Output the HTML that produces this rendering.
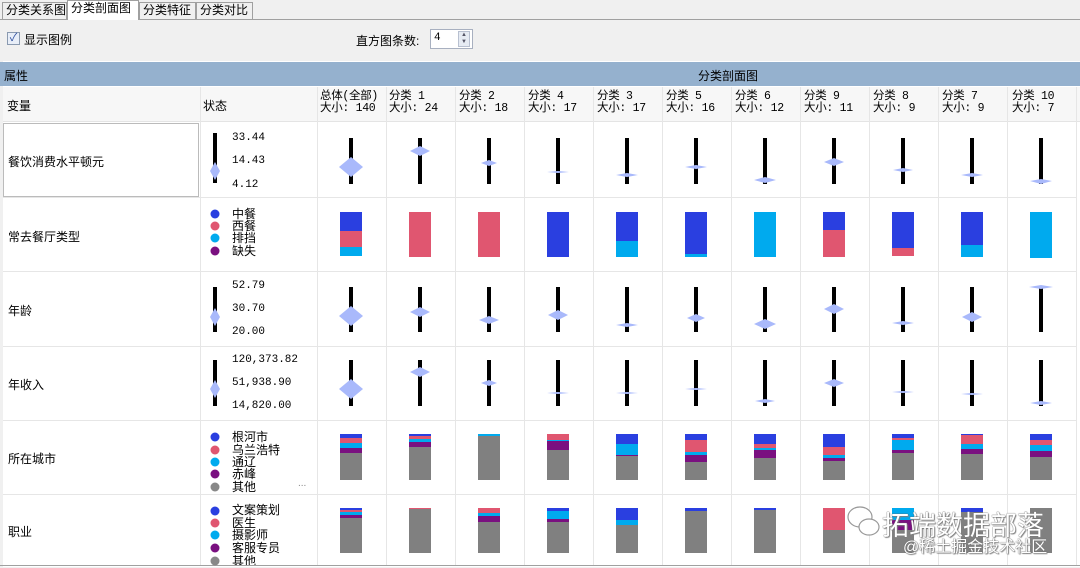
<!DOCTYPE html>
<html><head><meta charset="utf-8"><style>
*{margin:0;padding:0;box-sizing:border-box}
body{width:1080px;height:568px;background:#f0f0f0;font-family:"Liberation Sans","Noto Sans CJK SC",sans-serif;font-size:12px;color:#000;position:relative;overflow:hidden}
.a{position:absolute;white-space:nowrap}
.tab{position:absolute;top:2px;height:17px;border:1px solid #a0a0a0;border-bottom:none;background:#f0f0f0;font-size:12px;line-height:15px;padding-left:3px}
.m{font-family:"Liberation Mono","Noto Sans CJK SC",monospace;font-size:11px}
.h{position:absolute;top:91px;font-size:11.5px;line-height:12px;font-family:"Liberation Mono","Noto Sans CJK SC",monospace;letter-spacing:-0.3px}
.lg{position:absolute;left:232px;font-size:12px;line-height:12px}
</style></head><body>
<div class="a" style="left:0;top:19px;width:1080px;height:1px;background:#a0a0a0"></div>
<div class="tab" style="left:2px;width:65px">分类关系图</div>
<div class="tab" style="left:67px;top:0;width:72px;height:20px;background:#fff">分类剖面图</div>
<div class="tab" style="left:139px;width:57px">分类特征</div>
<div class="tab" style="left:196px;width:57px">分类对比</div>

<div class="a" style="left:7px;top:32px;width:13px;height:13px;border:1px solid #8a9ab0;background:#e8eef8;font-size:11px;line-height:11px;color:#3050a0;text-align:center">✓</div>
<div class="a" style="left:24px;top:31px">显示图例</div>
<div class="a" style="left:356px;top:32px">直方图条数:</div>
<div class="a" style="left:430px;top:29px;width:43px;height:20px;border:1px solid #a8b0c0;background:#fff"></div>
<div class="a m" style="left:434px;top:32px">4</div>
<div class="a" style="left:458px;top:31px;width:12px;height:16px;border:1px solid #b8c0d0;background:#e6ebf3;font-size:6px;line-height:7px;text-align:center;color:#556">▲<br>▼</div>

<div class="a" style="left:0;top:61px;width:1080px;height:506px;background:#fff;border-left:3px solid #f0f0f0"></div>
<div class="a" style="left:0;top:62px;width:1080px;height:24px;background:#95b1ce"></div>
<div class="a" style="left:4px;top:67px">属性</div>
<div class="a" style="left:698px;top:67px">分类剖面图</div>
<div class="a" style="left:3px;top:87px;width:1077px;height:35px;background:#f7f7f7;border-bottom:1px solid #e4e4e4"></div>
<div class="a" style="left:7px;top:97px">变量</div>
<div class="a" style="left:203px;top:97px">状态</div>
<div class="h" style="left:320px">总体(全部)<br>大小: 140</div>
<div class="h" style="left:389px">分类 1<br>大小: 24</div>
<div class="h" style="left:459px">分类 2<br>大小: 18</div>
<div class="h" style="left:528px">分类 4<br>大小: 17</div>
<div class="h" style="left:597px">分类 3<br>大小: 17</div>
<div class="h" style="left:666px">分类 5<br>大小: 16</div>
<div class="h" style="left:735px">分类 6<br>大小: 12</div>
<div class="h" style="left:804px">分类 9<br>大小: 11</div>
<div class="h" style="left:873px">分类 8<br>大小: 9</div>
<div class="h" style="left:942px">分类 7<br>大小: 9</div>
<div class="h" style="left:1012px">分类 10<br>大小: 7</div>

<svg class="a" style="left:0;top:0" width="1080" height="568">
<g stroke="#e6e6e6" stroke-width="1">
<line x1="200.5" y1="87" x2="200.5" y2="565"/><line x1="317.5" y1="87" x2="317.5" y2="565"/>
<line x1="386.5" y1="87" x2="386.5" y2="565"/><line x1="455.5" y1="87" x2="455.5" y2="565"/>
<line x1="524.5" y1="87" x2="524.5" y2="565"/><line x1="593.5" y1="87" x2="593.5" y2="565"/>
<line x1="662.5" y1="87" x2="662.5" y2="565"/><line x1="731.5" y1="87" x2="731.5" y2="565"/>
<line x1="800.5" y1="87" x2="800.5" y2="565"/><line x1="869.5" y1="87" x2="869.5" y2="565"/>
<line x1="938.5" y1="87" x2="938.5" y2="565"/><line x1="1007.5" y1="87" x2="1007.5" y2="565"/>
<line x1="1076.5" y1="87" x2="1076.5" y2="565"/>
<line x1="3" y1="197.5" x2="1077" y2="197.5"/><line x1="3" y1="271.5" x2="1077" y2="271.5"/>
<line x1="3" y1="346.5" x2="1077" y2="346.5"/><line x1="3" y1="420.5" x2="1077" y2="420.5"/>
<line x1="3" y1="494.5" x2="1077" y2="494.5"/>
</g>
<line x1="0" y1="565.5" x2="1080" y2="565.5" stroke="#a0a0a0"/>
<rect x="3.5" y="123.5" width="195" height="73" fill="none" stroke="#777" stroke-dasharray="1,1"/>
<g fill="#000">
<rect x="213" y="133" width="4" height="50"/><rect x="213" y="287" width="4" height="45"/><rect x="213" y="360" width="4" height="46"/>
<rect x="349" y="138" width="4" height="46"/><rect x="418" y="138" width="4" height="46"/><rect x="487" y="138" width="4" height="46"/><rect x="556" y="138" width="4" height="46"/><rect x="625" y="138" width="4" height="46"/><rect x="694" y="138" width="4" height="46"/><rect x="763" y="138" width="4" height="46"/><rect x="832" y="138" width="4" height="46"/><rect x="901" y="138" width="4" height="46"/><rect x="970" y="138" width="4" height="46"/><rect x="1039" y="138" width="4" height="46"/>
<rect x="349" y="287" width="4" height="45"/><rect x="418" y="287" width="4" height="45"/><rect x="487" y="287" width="4" height="45"/><rect x="556" y="287" width="4" height="45"/><rect x="625" y="287" width="4" height="45"/><rect x="694" y="287" width="4" height="45"/><rect x="763" y="287" width="4" height="45"/><rect x="832" y="287" width="4" height="45"/><rect x="901" y="287" width="4" height="45"/><rect x="970" y="287" width="4" height="45"/><rect x="1039" y="287" width="4" height="45"/>
<rect x="349" y="360" width="4" height="46"/><rect x="418" y="360" width="4" height="46"/><rect x="487" y="360" width="4" height="46"/><rect x="556" y="360" width="4" height="46"/><rect x="625" y="360" width="4" height="46"/><rect x="694" y="360" width="4" height="46"/><rect x="763" y="360" width="4" height="46"/><rect x="832" y="360" width="4" height="46"/><rect x="901" y="360" width="4" height="46"/><rect x="970" y="360" width="4" height="46"/><rect x="1039" y="360" width="4" height="46"/>
</g>
<g fill="#a9b9fb">
<polygon points="210,171 215,162 220,171 215,180"/><polygon points="210,317 215,308 220,317 215,326"/><polygon points="210,389 215,380 220,389 215,398"/>
<polygon points="339,167 351,157 363,167 351,177"/><polygon points="410,151 420,146 430,151 420,156"/><polygon points="481,163 489,160 497,163 489,166"/><polygon points="547,172 558,171 569,172 558,173"/><polygon points="616,175 627,173 638,175 627,177"/><polygon points="685,167 696,165 707,167 696,169"/><polygon points="754,180 765,177 776,180 765,183"/><polygon points="824,162 834,158 844,162 834,166"/><polygon points="893,170 903,168 913,170 903,172"/><polygon points="961,175 972,173 983,175 972,177"/><polygon points="1030,181 1041,179 1052,181 1041,184"/>
<polygon points="339,316 351,306 363,316 351,326"/><polygon points="410,312 420,307 430,312 420,317"/><polygon points="479,320 489,316 499,320 489,324"/><polygon points="548,315 558,310 568,315 558,320"/><polygon points="616,325 627,323 638,325 627,327"/><polygon points="687,318 696,314 705,318 696,322"/><polygon points="754,324 765,319 776,324 765,329"/><polygon points="824,309 834,304 844,309 834,314"/><polygon points="892,323 903,321 914,323 903,325"/><polygon points="962,317 972,312 982,317 972,322"/><polygon points="1029,287 1041,285 1053,287 1041,289"/>
<polygon points="339,389 351,379 363,389 351,399"/><polygon points="410,372 420,367 430,372 420,377"/><polygon points="481,383 489,380 497,383 489,386"/><polygon points="547,393 558,392 569,393 558,394"/><polygon points="616,393 627,392 638,393 627,394"/><polygon points="685,389 696,388 707,389 696,390"/><polygon points="755,401 765,399 775,401 765,403"/><polygon points="824,383 834,379 844,383 834,387"/><polygon points="892,392 903,391 914,392 903,393"/><polygon points="961,394 972,393 983,394 972,395"/><polygon points="1030,403 1041,401 1052,403 1041,405"/>
</g>
<g>
<circle cx="215" cy="214" r="4.5" fill="#2a3fe0"/><circle cx="215" cy="226" r="4.5" fill="#e05670"/><circle cx="215" cy="238" r="4.5" fill="#00aaee"/><circle cx="215" cy="251" r="4.5" fill="#7a1080"/>
<circle cx="215" cy="437" r="4.5" fill="#2a3fe0"/><circle cx="215" cy="450" r="4.5" fill="#e05670"/><circle cx="215" cy="462" r="4.5" fill="#00aaee"/><circle cx="215" cy="474" r="4.5" fill="#7a1080"/><circle cx="215" cy="487" r="4.5" fill="#888"/>
<circle cx="215" cy="511" r="4.5" fill="#2a3fe0"/><circle cx="215" cy="523" r="4.5" fill="#e05670"/><circle cx="215" cy="535" r="4.5" fill="#00aaee"/><circle cx="215" cy="548" r="4.5" fill="#7a1080"/><circle cx="215" cy="561" r="4.5" fill="#888"/>
</g>
<g>
<rect x="340" y="212" width="22" height="19" fill="#2a3fe0"/><rect x="340" y="231" width="22" height="16" fill="#e05670"/><rect x="340" y="247" width="22" height="9" fill="#00aaee"/>
<rect x="409" y="212" width="22" height="45" fill="#e05670"/>
<rect x="478" y="212" width="22" height="45" fill="#e05670"/>
<rect x="547" y="212" width="22" height="45" fill="#2a3fe0"/>
<rect x="616" y="212" width="22" height="29" fill="#2a3fe0"/><rect x="616" y="241" width="22" height="16" fill="#00aaee"/>
<rect x="685" y="212" width="22" height="42" fill="#2a3fe0"/><rect x="685" y="254" width="22" height="3" fill="#00aaee"/>
<rect x="754" y="212" width="22" height="45" fill="#00aaee"/>
<rect x="823" y="212" width="22" height="18" fill="#2a3fe0"/><rect x="823" y="230" width="22" height="27" fill="#e05670"/>
<rect x="892" y="212" width="22" height="36" fill="#2a3fe0"/><rect x="892" y="248" width="22" height="8" fill="#e05670"/>
<rect x="961" y="212" width="22" height="33" fill="#2a3fe0"/><rect x="961" y="245" width="22" height="12" fill="#00aaee"/>
<rect x="1030" y="212" width="22" height="46" fill="#00aaee"/>
</g>
<g>
<rect x="340" y="434" width="22" height="4" fill="#2a3fe0"/><rect x="340" y="438" width="22" height="5" fill="#e05670"/><rect x="340" y="443" width="22" height="5" fill="#00aaee"/><rect x="340" y="448" width="22" height="5" fill="#7a1080"/><rect x="340" y="453" width="22" height="27" fill="#808080"/>
<rect x="409" y="434" width="22" height="2" fill="#2a3fe0"/><rect x="409" y="436" width="22" height="3" fill="#e05670"/><rect x="409" y="439" width="22" height="3" fill="#00aaee"/><rect x="409" y="442" width="22" height="5" fill="#7a1080"/><rect x="409" y="447" width="22" height="33" fill="#808080"/>
<rect x="478" y="434" width="22" height="2" fill="#00aaee"/><rect x="478" y="436" width="22" height="44" fill="#808080"/>
<rect x="547" y="434" width="22" height="6" fill="#e05670"/><rect x="547" y="440" width="22" height="1" fill="#00aaee"/><rect x="547" y="441" width="22" height="9" fill="#7a1080"/><rect x="547" y="450" width="22" height="30" fill="#808080"/>
<rect x="616" y="434" width="22" height="10" fill="#2a3fe0"/><rect x="616" y="444" width="22" height="11" fill="#00aaee"/><rect x="616" y="455" width="22" height="1" fill="#7a1080"/><rect x="616" y="456" width="22" height="24" fill="#808080"/>
<rect x="685" y="434" width="22" height="6" fill="#2a3fe0"/><rect x="685" y="440" width="22" height="12" fill="#e05670"/><rect x="685" y="452" width="22" height="3" fill="#00aaee"/><rect x="685" y="455" width="22" height="7" fill="#7a1080"/><rect x="685" y="462" width="22" height="18" fill="#808080"/>
<rect x="754" y="434" width="22" height="10" fill="#2a3fe0"/><rect x="754" y="444" width="22" height="4" fill="#e05670"/><rect x="754" y="448" width="22" height="2" fill="#00aaee"/><rect x="754" y="450" width="22" height="8" fill="#7a1080"/><rect x="754" y="458" width="22" height="22" fill="#808080"/>
<rect x="823" y="434" width="22" height="13" fill="#2a3fe0"/><rect x="823" y="447" width="22" height="8" fill="#e05670"/><rect x="823" y="455" width="22" height="3" fill="#00aaee"/><rect x="823" y="458" width="22" height="3" fill="#7a1080"/><rect x="823" y="461" width="22" height="19" fill="#808080"/>
<rect x="892" y="434" width="22" height="4" fill="#2a3fe0"/><rect x="892" y="438" width="22" height="2" fill="#e05670"/><rect x="892" y="440" width="22" height="10" fill="#00aaee"/><rect x="892" y="450" width="22" height="3" fill="#7a1080"/><rect x="892" y="453" width="22" height="27" fill="#808080"/>
<rect x="961" y="434" width="22" height="1" fill="#2a3fe0"/><rect x="961" y="435" width="22" height="9" fill="#e05670"/><rect x="961" y="444" width="22" height="5" fill="#00aaee"/><rect x="961" y="449" width="22" height="5" fill="#7a1080"/><rect x="961" y="454" width="22" height="26" fill="#808080"/>
<rect x="1030" y="434" width="22" height="6" fill="#2a3fe0"/><rect x="1030" y="440" width="22" height="5" fill="#e05670"/><rect x="1030" y="445" width="22" height="6" fill="#00aaee"/><rect x="1030" y="451" width="22" height="6" fill="#7a1080"/><rect x="1030" y="457" width="22" height="23" fill="#808080"/>
</g>
<g>
<rect x="340" y="508" width="22" height="2" fill="#2a3fe0"/><rect x="340" y="510" width="22" height="2" fill="#e05670"/><rect x="340" y="512" width="22" height="3" fill="#00aaee"/><rect x="340" y="515" width="22" height="3" fill="#7a1080"/><rect x="340" y="518" width="22" height="35" fill="#808080"/>
<rect x="409" y="508" width="22" height="1" fill="#e05670"/><rect x="409" y="509" width="22" height="44" fill="#808080"/>
<rect x="478" y="508" width="22" height="5" fill="#e05670"/><rect x="478" y="513" width="22" height="3" fill="#00aaee"/><rect x="478" y="516" width="22" height="6" fill="#7a1080"/><rect x="478" y="522" width="22" height="31" fill="#808080"/>
<rect x="547" y="508" width="22" height="3" fill="#2a3fe0"/><rect x="547" y="511" width="22" height="8" fill="#00aaee"/><rect x="547" y="519" width="22" height="3" fill="#7a1080"/><rect x="547" y="522" width="22" height="31" fill="#808080"/>
<rect x="616" y="508" width="22" height="12" fill="#2a3fe0"/><rect x="616" y="520" width="22" height="5" fill="#00aaee"/><rect x="616" y="525" width="22" height="28" fill="#808080"/>
<rect x="685" y="508" width="22" height="3" fill="#2a3fe0"/><rect x="685" y="511" width="22" height="42" fill="#808080"/>
<rect x="754" y="508" width="22" height="2" fill="#2a3fe0"/><rect x="754" y="510" width="22" height="43" fill="#808080"/>
<rect x="823" y="508" width="22" height="22" fill="#e05670"/><rect x="823" y="530" width="22" height="23" fill="#808080"/>
<rect x="892" y="508" width="22" height="12" fill="#00aaee"/><rect x="892" y="520" width="22" height="10" fill="#7a1080"/><rect x="892" y="530" width="22" height="23" fill="#808080"/>
<rect x="961" y="508" width="22" height="4" fill="#2a3fe0"/><rect x="961" y="512" width="22" height="41" fill="#808080"/>
<rect x="1030" y="508" width="22" height="45" fill="#808080"/>
</g>
<g fill="#fff" stroke="#999" stroke-width="1.2">
<ellipse cx="860" cy="517" rx="12" ry="10"/><ellipse cx="869" cy="527" rx="10" ry="8"/>
</g>
</svg>

<div class="a" style="left:8px;top:153px">餐饮消费水平顿元</div>
<div class="a" style="left:8px;top:228px">常去餐厅类型</div>
<div class="a" style="left:8px;top:302px">年龄</div>
<div class="a" style="left:8px;top:376px">年收入</div>
<div class="a" style="left:8px;top:450px">所在城市</div>
<div class="a" style="left:8px;top:523px">职业</div>

<div class="a m" style="left:232px;top:132px">33.44</div>
<div class="a m" style="left:232px;top:155px">14.43</div>
<div class="a m" style="left:232px;top:179px">4.12</div>
<div class="a m" style="left:232px;top:280px">52.79</div>
<div class="a m" style="left:232px;top:303px">30.70</div>
<div class="a m" style="left:232px;top:326px">20.00</div>
<div class="a m" style="left:232px;top:354px">120,373.82</div>
<div class="a m" style="left:232px;top:377px">51,938.90</div>
<div class="a m" style="left:232px;top:400px">14,820.00</div>

<div class="lg" style="top:208px">中餐</div><div class="lg" style="top:220px">西餐</div><div class="lg" style="top:232px">排挡</div><div class="lg" style="top:245px">缺失</div>
<div class="lg" style="top:431px">根河市</div><div class="lg" style="top:444px">乌兰浩特</div><div class="lg" style="top:456px">通辽</div><div class="lg" style="top:468px">赤峰</div><div class="lg" style="top:481px">其他</div>
<div class="a" style="left:298px;top:478px;font-size:10px;color:#888">...</div>
<div class="lg" style="top:504px">文案策划</div><div class="lg" style="top:517px">医生</div><div class="lg" style="top:529px">摄影师</div><div class="lg" style="top:542px">客服专员</div>
<div class="a" style="left:0;top:555px;width:320px;height:10px;overflow:hidden"><div class="lg" style="top:0">其他</div><div class="a" style="left:298px;top:-8px;font-size:10px;color:#888">...</div></div>

<div class="a" style="left:882px;top:504px;font-size:27px;color:#fff;text-shadow:0 0 1px #666,0 0 1px #666,1px 1px 1px #888">拓端数据部落</div>
<div class="a" style="left:903px;top:533px;font-size:16px;color:#fff;text-shadow:0 0 1px #666,0 0 1px #666,1px 1px 1px #888">@稀土掘金技术社区</div>
</body></html>
